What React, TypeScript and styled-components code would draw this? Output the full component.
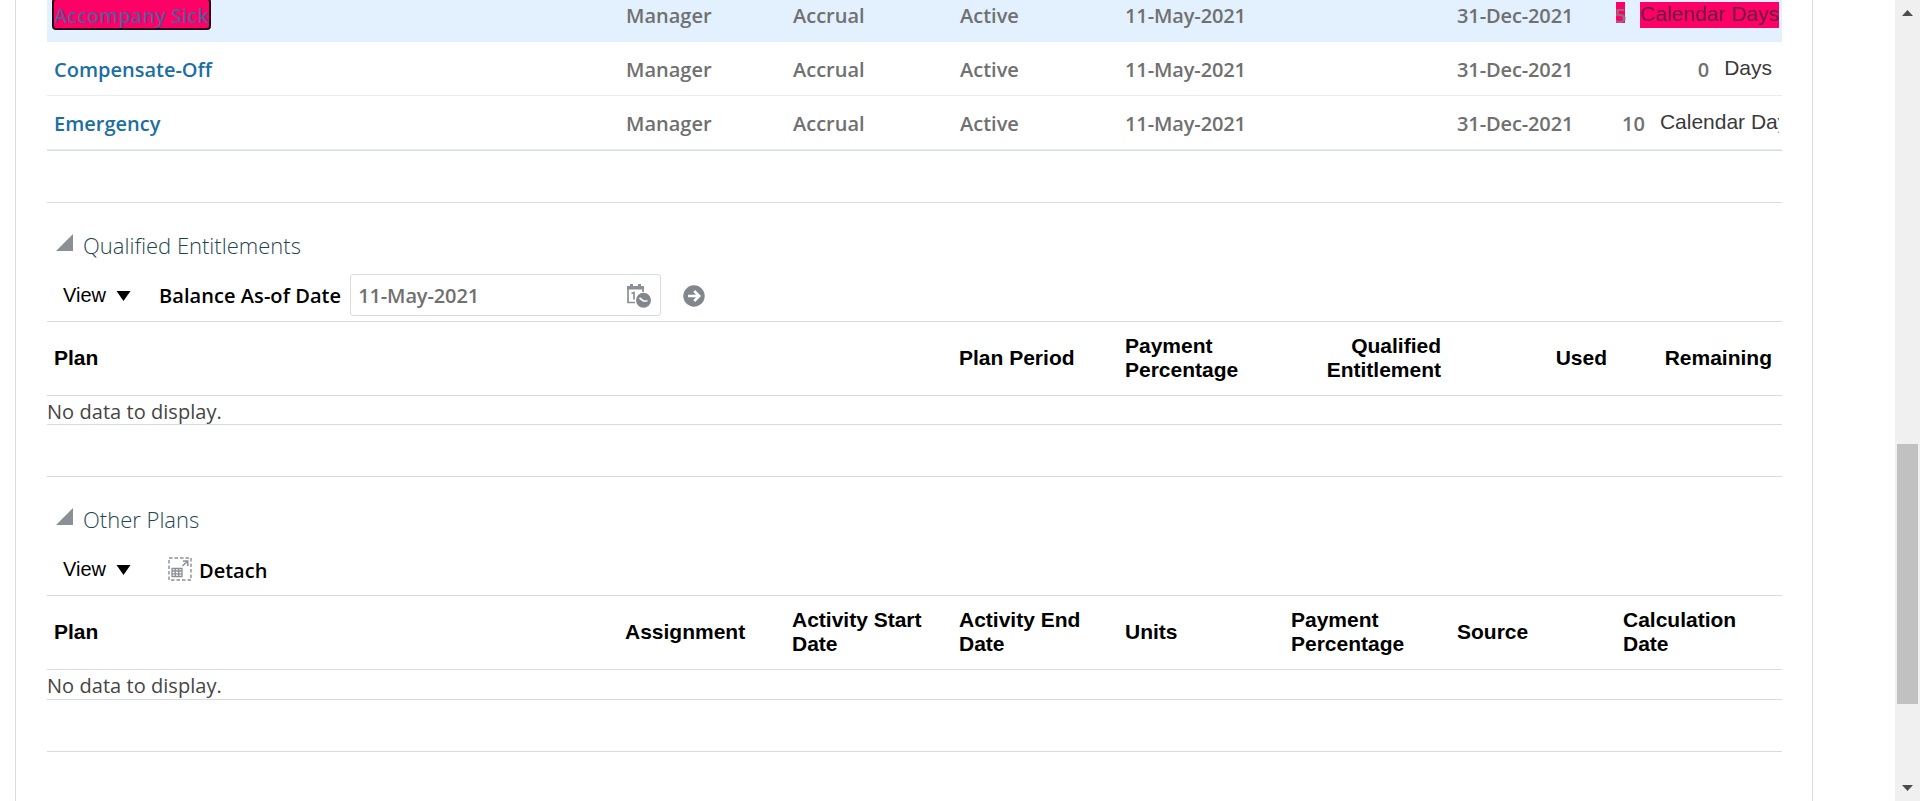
import React from 'react';
import styled, { createGlobalStyle } from 'styled-components';

const LINE = '#d6dde1';
const ui = '"Open Sans", "Noto Sans", sans-serif';
const arial = '"Liberation Sans", Arial, sans-serif';

const GlobalStyle = createGlobalStyle`
  *, *::before, *::after { box-sizing: border-box; }
  body { margin: 0; background: #fff; overflow: hidden; }
`;

const Page = styled.div`
  display: flex;
  height: 801px;
  overflow: hidden;
  background: #fff;
`;

const Panel = styled.main`
  width: 1798px;
  margin-left: 15px;
  padding: 0 30px 0 31px;
  border: solid ${LINE};
  border-width: 0 1px;
`;

const ScrollTrack = styled.aside`
  display: flex;
  flex-direction: column;
  align-items: center;
  width: 25px;
  height: 801px;
  margin-left: auto;
  padding: 10px 2px;
  background: #f0f0f0;
`;

const ScrollArrow = styled.svg`
  display: block;
  flex: none;
  width: 11px;
  height: 6px;
  fill: #4d4d4d;
`;

const ScrollThumb = styled.div`
  width: 21px;
  height: 260px;
  margin: 428px 0 auto;
  background: #c1c1c1;
`;

const Grid = styled.div`
  display: grid;
  grid-template-columns: 571px 167px 167px 166px 166px 166px 166px 165px;
`;

const PlanRow = styled(Grid)<{ $selected?: boolean; $height: number }>`
  height: ${p => p.$height}px;
  align-items: end;
  background: ${p => (p.$selected ? '#e3f1fe' : '#fff')};
  border-bottom: 1px solid ${p => (p.$selected ? '#e3f1fe' : '#e9eced')};
`;

const PlanTable = styled.section`
  height: 151px;
  border-bottom: 1px solid ${LINE};
`;

const Cell = styled.div`
  height: 39px;
  padding-left: 8px;
  font: 570 20px/27px ${ui};
  color: #707070;
  white-space: nowrap;
`;

const DateCell = styled(Cell)`
  padding-left: 7px;
  letter-spacing: -0.12px;
`;

const PlanLink = styled.a<{ $focused?: boolean }>`
  display: inline-block;
  color: ${p => (p.$focused ? '#5f5596' : '#1b6fa3')};
  margin-left: -1px;
  ${p =>
    p.$focused &&
    `height: 32px;
     margin: -4px 0 0 -3px;
     padding: 2px 0 0;
     border: 2px solid #2a0714;
     border-radius: 4px;
     background: #ff0066;`}
`;

const Balance = styled(Cell)<{ $align: 'start' | 'end'; $inset: number }>`
  display: flex;
  justify-content: ${p => p.$align};
  align-items: flex-start;
  gap: 15px;
  margin-right: 2px;
  padding: ${p => (p.$align === 'end' ? `0 ${p.$inset}px 0 0` : `0 0 0 ${p.$inset}px`)};
  overflow: hidden;
`;

const Amount = styled.span<{ $marked?: boolean }>`
  flex: none;
  height: ${p => (p.$marked ? '21px' : '27px')};
  ${p => p.$marked && 'width: 9px; text-indent: -1px; color: #97687f; background: #ff0066;'}
`;

const Unit = styled.span<{ $marked?: boolean }>`
  flex: none;
  height: 26px;
  font: 400 21px/23px ${arial};
  color: ${p => (p.$marked ? '#6b1f42' : '#3a3a3a')};
  background: ${p => (p.$marked ? '#ff0066' : 'transparent')};
`;

const Section = styled.section`
  margin-top: 51px;
  border-top: 1px solid ${LINE};
`;

const SectionHead = styled.header`
  display: flex;
  align-items: flex-start;
  height: 64px;
  padding: 31px 0 0 9px;
`;

const Disclosure = styled.svg`
  display: block;
  width: 17px;
  height: 17px;
  margin-right: 10px;
  fill: #8a9096;
`;

const Title = styled.h2`
  margin: -4px 0 0;
  font: 300 22px/30px ${ui};
  color: #1f4650;
`;

const Toolbar = styled.div`
  display: flex;
  align-items: center;
  height: 55px;
  padding: 7px 0 5px 16px;
  border-bottom: 1px solid ${LINE};
`;

const MenuButton = styled.button`
  display: flex;
  align-items: center;
  gap: 10px;
  height: 27px;
  margin: 0;
  padding: 0 0 1px;
  border: 0;
  background: none;
  font: 400 20px/24px ${arial};
  color: #000;
`;

const Caret = styled.svg`
  display: block;
  width: 15px;
  height: 10px;
  margin-top: 3px;
`;

const FieldLabel = styled.label`
  margin-left: 28px;
  padding-top: 2px;
  font: 570 20px/28px ${ui};
  letter-spacing: 0.06px;
  color: #000;
`;

const DateField = styled.div`
  display: flex;
  align-items: center;
  justify-content: space-between;
  width: 311px;
  height: 42px;
  margin-left: 9px;
  padding: 1px 9px 0 7px;
  border: 1px solid ${LINE};
  border-radius: 3px;
  font: 570 20px/28px ${ui};
  letter-spacing: -0.12px;
  color: #707070;
`;

const Icon = styled.svg<{ $gap?: number }>`
  display: block;
  flex: none;
  width: 24px;
  height: 24px;
  margin-left: ${p => p.$gap ?? 0}px;
`;

const DetachLabel = styled.span`
  margin-left: 7px;
  padding-top: 3px;
  font: 570 20px/28px ${ui};
  color: #000;
`;

const HeaderRow = styled(Grid)`
  height: 74px;
  align-items: center;
  border-bottom: 1px solid ${LINE};
`;

const HeaderCell = styled.div<{ $align?: 'right'; $span?: number }>`
  grid-column: span ${p => p.$span ?? 1};
  padding: 0 9px 2px 7px;
  font: 700 21px/24px ${arial};
  color: #000;
  text-align: ${p => p.$align ?? 'left'};
  white-space: pre-line;
`;

const EmptyMessage = styled.p<{ $height: number }>`
  height: ${p => p.$height}px;
  margin: 0;
  padding-top: 2px;
  border-bottom: 1px solid ${LINE};
  font: 400 20px/28px ${ui};
  letter-spacing: 0.05px;
  color: #454545;
`;

const EndRule = styled.hr`
  margin: 51px 0 0;
  border: 0;
  border-top: 1px solid ${LINE};
`;

type Plan = {
  name: string;
  amount: string;
  unit: string;
  align: 'start' | 'end';
  inset: number;
  height: number;
  marked?: boolean;
};

const plans: Plan[] = [
  { name: 'Accompany Sick', amount: '5', unit: 'Calendar Days', align: 'end', inset: 0, height: 42, marked: true },
  { name: 'Compensate-Off', amount: '0', unit: 'Days', align: 'end', inset: 7, height: 54 },
  { name: 'Emergency', amount: '10', unit: 'Calendar Days', align: 'start', inset: 6, height: 54 },
];

type Column = { label: string; align?: 'right'; span?: number };

const entitlementColumns: Column[] = [
  { label: 'Plan', span: 3 },
  { label: 'Plan Period' },
  { label: 'Payment\nPercentage' },
  { label: 'Qualified\nEntitlement', align: 'right' },
  { label: 'Used', align: 'right' },
  { label: 'Remaining', align: 'right' },
];

const otherColumns: Column[] = [
  { label: 'Plan' },
  { label: 'Assignment' },
  { label: 'Activity Start\nDate' },
  { label: 'Activity End\nDate' },
  { label: 'Units' },
  { label: 'Payment\nPercentage' },
  { label: 'Source' },
  { label: 'Calculation\nDate' },
];

const SectionTitle = ({ children }: { children: string }) => (
  <SectionHead>
    <Disclosure viewBox="0 0 17 17"><path d="M0 17 17 0V17Z" /></Disclosure>
    <Title>{children}</Title>
  </SectionHead>
);

const ViewMenu = () => (
  <MenuButton>
    View
    <Caret viewBox="0 0 15 10"><path d="M.5 0h14L7.5 10Z" /></Caret>
  </MenuButton>
);

const TableHeader = ({ columns }: { columns: Column[] }) => (
  <HeaderRow>
    {columns.map(c => (
      <HeaderCell key={c.label} $align={c.align} $span={c.span}>{c.label}</HeaderCell>
    ))}
  </HeaderRow>
);

const CalendarIcon = () => (
  <Icon viewBox="0 0 24 24">
    <path d="M1 4V18.5H8M16 4V8" fill="none" stroke="#8a9096" strokeWidth="1.7" />
    <path d="M0 2h17v3.5H0ZM3 0h3v4H3ZM11 0h3v4h-3Z" fill="#8a9096" />
    <path d="M4.5 9.5 7 8.5V15.5" fill="none" stroke="#8a9096" strokeWidth="1.7" />
    <circle cx="16.5" cy="16.3" r="7.5" fill="#81878d" />
    <path d="M12.5 14 16.5 17H20.5" fill="none" stroke="#fff" strokeWidth="1.7" />
  </Icon>
);

const GoIcon = () => (
  <Icon $gap={21} viewBox="0 0 24 24">
    <circle cx="12" cy="13" r="10.7" fill="#81878d" />
    <path d="M6 13H17M12.2 8 17.2 13 12.2 18" fill="none" stroke="#fff" strokeWidth="2.6" />
  </Icon>
);

const DetachIcon = () => (
  <Icon $gap={37} viewBox="0 0 24 24">
    <rect x="1" y="1" width="22" height="22" fill="none" stroke="#8a9096" strokeWidth="1.4" strokeDasharray="3.5 2" />
    <path d="M4 11.5H14V19.5H4ZM4 14H14M4 16.8H14M7.3 11.5V19.5M10.7 11.5V19.5" fill="none" stroke="#8a9096" strokeWidth="1.3" />
    <path d="M14.5 9 19 4.5M15 4H19.8V9" fill="none" stroke="#8a9096" strokeWidth="1.5" />
  </Icon>
);

export default function App() {
  return (
    <Page>
      <GlobalStyle />
      <Panel>
        <PlanTable>
          {plans.map(p => (
            <PlanRow key={p.name} $height={p.height} $selected={p.marked}>
              <Cell><PlanLink $focused={p.marked}>{p.name}</PlanLink></Cell>
              <Cell>Manager</Cell>
              <Cell>Accrual</Cell>
              <Cell>Active</Cell>
              <DateCell>11-May-2021</DateCell>
              <Cell />
              <DateCell>31-Dec-2021</DateCell>
              <Balance $align={p.align} $inset={p.inset}>
                <Amount $marked={p.marked}>{p.amount}</Amount>
                <Unit $marked={p.marked}>{p.unit}</Unit>
              </Balance>
            </PlanRow>
          ))}
        </PlanTable>

        <Section>
          <SectionTitle>Qualified Entitlements</SectionTitle>
          <Toolbar>
            <ViewMenu />
            <FieldLabel>Balance As-of Date</FieldLabel>
            <DateField>11-May-2021<CalendarIcon /></DateField>
            <GoIcon />
          </Toolbar>
          <TableHeader columns={entitlementColumns} />
          <EmptyMessage $height={29}>No data to display.</EmptyMessage>
        </Section>

        <Section>
          <SectionTitle>Other Plans</SectionTitle>
          <Toolbar>
            <ViewMenu />
            <DetachIcon />
            <DetachLabel>Detach</DetachLabel>
          </Toolbar>
          <TableHeader columns={otherColumns} />
          <EmptyMessage $height={30}>No data to display.</EmptyMessage>
        </Section>
        <EndRule />
      </Panel>
      <ScrollTrack>
        <ScrollArrow viewBox="0 0 11 6"><path d="M0 6 5.5 0 11 6Z" /></ScrollArrow>
        <ScrollThumb />
        <ScrollArrow viewBox="0 0 11 6"><path d="M0 0H11L5.5 6Z" /></ScrollArrow>
      </ScrollTrack>
    </Page>
  );
}
